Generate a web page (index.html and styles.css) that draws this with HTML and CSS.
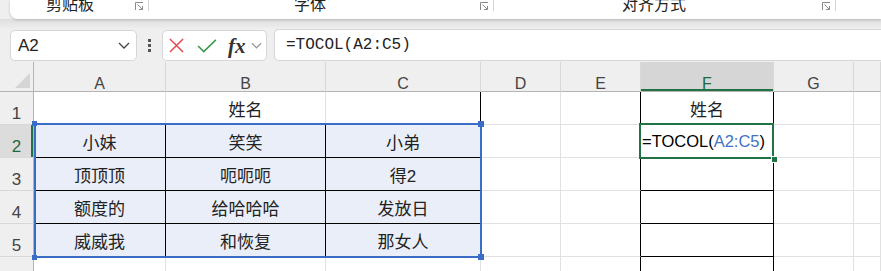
FILE: index.html
```html
<!DOCTYPE html>
<html lang="zh-CN">
    <head>
        <meta charset="UTF-8" />
        <meta name="viewport" content="width=device-width, initial-scale=1.0" />
        <title>TOCOL</title>

        <link rel="stylesheet" href="styles.css">
    </head>
    <body>
        <div class="ribbon">
            <div class="group g1">
                <span class="label">剪贴板</span>
                <svg class="launch" viewBox="0 0 8 8"><path d="M0.5 8V0.5H8M2.5 2.5L7.5 7.5M7.5 4V7.5H4" /></svg>
                <span class="sep"></span>
            </div>
            <div class="group g2">
                <span class="label">字体</span>
                <svg class="launch" viewBox="0 0 8 8"><path d="M0.5 8V0.5H8M2.5 2.5L7.5 7.5M7.5 4V7.5H4" /></svg>
                <span class="sep"></span>
            </div>
            <div class="group g3">
                <span class="label">对齐方式</span>
                <svg class="launch" viewBox="0 0 8 8"><path d="M0.5 8V0.5H8M2.5 2.5L7.5 7.5M7.5 4V7.5H4" /></svg>
                <span class="sep"></span>
            </div>
        </div>
        <div class="shade"></div>

        <div class="fbar">
            <div class="namebox">
                <span>A2</span>
                <svg class="chev" viewBox="0 0 12 7"><polyline points="1,1 6,6 11,1" /></svg>
            </div>
            <div class="dots"><i></i><i></i><i></i></div>
            <div class="fxbox">
                <svg class="cancel" viewBox="0 0 16 16"><path d="M1 1L15 15M15 1L1 15" /></svg>
                <svg class="enter" viewBox="0 0 21 15"><polyline points="1,7.5 7,13.5 20,1" /></svg>
                <span class="fx">fx</span>
                <svg class="chev small" viewBox="0 0 12 7"><polyline points="1,1 6,6 11,1" /></svg>
            </div>
            <div class="input">=TOCOL(A2:C5)</div>
        </div>

        <div class="sheet">
            <div class="grid">
                <div class="cell corner"><svg viewBox="0 0 16 16"><polygon points="16,0 16,16 0,16" /></svg></div>
                <div class="cell hdr">A</div>
                <div class="cell hdr">B</div>
                <div class="cell hdr">C</div>
                <div class="cell hdr">D</div>
                <div class="cell hdr">E</div>
                <div class="cell hdr on">F</div>
                <div class="cell hdr">G</div>
                <div class="cell hdr"></div>

                <div class="cell rh">1</div>
                <div class="cell"></div>
                <div class="cell">姓名</div>
                <div class="cell bk-r"></div>
                <div class="cell"></div>
                <div class="cell bk-r"></div>
                <div class="cell bk-r bk-b">姓名</div>
                <div class="cell"></div>
                <div class="cell"></div>

                <div class="cell rh on">2</div>
                <div class="cell rng bk-r bk-b">小妹</div>
                <div class="cell rng bk-r bk-b">笑笑</div>
                <div class="cell rng bk-b">小弟</div>
                <div class="cell"></div>
                <div class="cell bk-r"></div>
                <div class="cell bk-r bk-b edit">=TOCOL(<span class="ref">A2:C5</span>)</div>
                <div class="cell"></div>
                <div class="cell"></div>

                <div class="cell rh">3</div>
                <div class="cell rng bk-r bk-b">顶顶顶</div>
                <div class="cell rng bk-r bk-b">呃呃呃</div>
                <div class="cell rng bk-b">得2</div>
                <div class="cell"></div>
                <div class="cell bk-r"></div>
                <div class="cell bk-r bk-b"></div>
                <div class="cell"></div>
                <div class="cell"></div>

                <div class="cell rh">4</div>
                <div class="cell rng bk-r bk-b">额度的</div>
                <div class="cell rng bk-r bk-b">给哈哈哈</div>
                <div class="cell rng bk-b">发放日</div>
                <div class="cell"></div>
                <div class="cell bk-r"></div>
                <div class="cell bk-r bk-b"></div>
                <div class="cell"></div>
                <div class="cell"></div>

                <div class="cell rh">5</div>
                <div class="cell rng bk-r">威威我</div>
                <div class="cell rng bk-r">和恢复</div>
                <div class="cell rng">那女人</div>
                <div class="cell"></div>
                <div class="cell bk-r"></div>
                <div class="cell bk-r bk-b"></div>
                <div class="cell"></div>
                <div class="cell"></div>

                <div class="cell rh">6</div>
                <div class="cell"></div>
                <div class="cell"></div>
                <div class="cell"></div>
                <div class="cell"></div>
                <div class="cell bk-r"></div>
                <div class="cell bk-r"></div>
                <div class="cell"></div>
                <div class="cell"></div>
            </div>

            <div class="range"></div>
            <i class="knob tl"></i>
            <i class="knob tr"></i>
            <i class="knob bl"></i>
            <i class="knob br"></i>
            <div class="active"></div>
            <i class="fill"></i>
        </div>
    </body>
</html>
```

FILE: styles.css
```css
body {
    margin: 0px;
    padding: 0px;
    width: 881px;
    height: 271px;
    overflow: hidden;
    font-family: "Liberation Sans", "Noto Sans CJK SC", sans-serif;
    background-color: #efefef;
    color: #222222;
}

/* ribbon */
.ribbon {
    height: 19px;
    margin-left: 10px;
    display: flex;
    background-color: #ffffff;
    border-bottom-left-radius: 8px;
    overflow: hidden;
    position: relative;
    z-index: 1;
    box-shadow: 0 1px 3px rgba(0, 0, 0, 0.18);
}

.shade {
    height: 10px;
    background: linear-gradient(#dedede, #efefef);
}

.group {
    display: flex;
    align-items: flex-start;
}

.label {
    font-family: "Noto Sans CJK SC", sans-serif;
    font-size: 16px;
    line-height: 16px;
    margin-top: -5px;
    text-align: center;
    box-sizing: border-box;
}

.g1 .label { width: 125px; padding-right: 5px; }
.g2 .label { width: 331px; padding-right: 9px; }
.g3 .label { width: 328px; padding-right: 8px; }

.launch {
    width: 8px;
    height: 8px;
    margin-top: 2px;
    fill: none;
    stroke: #8a8a8a;
    stroke-width: 1;
}

.sep {
    width: 1px;
    height: 11px;
    margin-left: 5px;
    background-color: #d4d4d4;
}

/* formula bar */
.fbar {
    height: 32px;
    display: flex;
    align-items: center;
}

.namebox {
    margin-left: 10px;
    width: 127px;
    height: 31px;
    margin-top: 1px;
    box-sizing: border-box;
    border: 1px solid #d6d6d6;
    border-radius: 5px;
    background-color: #ffffff;
    display: flex;
    align-items: center;
    justify-content: space-between;
    padding: 0 6px 0 7px;
    font-size: 17px;
}

.chev {
    width: 12px;
    height: 7px;
    fill: none;
    stroke: #444444;
    stroke-width: 1.3;
}

.chev.small {
    width: 11px;
    stroke: #9a9a9a;
}

.dots {
    margin-left: 11px;
    display: flex;
    flex-direction: column;
    gap: 2px;
    margin-top: 1px;
}

.dots i {
    width: 3px;
    height: 3px;
    background-color: #555555;
}

.fxbox {
    margin-left: 11px;
    width: 105px;
    height: 31px;
    margin-top: 1px;
    box-sizing: border-box;
    border: 1px solid #d6d6d6;
    border-radius: 5px;
    background-color: #ffffff;
    display: flex;
    align-items: center;
    padding-left: 6px;
}

.cancel {
    width: 15px;
    height: 15px;
    fill: none;
    stroke: #e5484d;
    stroke-width: 1.6;
}

.enter {
    width: 20px;
    height: 14px;
    margin-left: 13px;
    fill: none;
    stroke: #3c9a4c;
    stroke-width: 1.7;
}

.fx {
    margin-left: 11px;
    font-family: "Liberation Serif", serif;
    font-style: italic;
    font-weight: bold;
    font-size: 21px;
    line-height: 20px;
    color: #333333;
}

.fxbox .chev.small {
    margin-left: 5px;
}

.input {
    flex: 1;
    margin-left: 7px;
    height: 32px;
    box-sizing: border-box;
    border: 1px solid #d6d6d6;
    border-right: none;
    border-radius: 5px 0 0 5px;
    background-color: #ffffff;
    padding-left: 11px;
    font-family: "Liberation Mono", monospace;
    font-size: 16px;
    line-height: 30px;
}

/* sheet */
.sheet {
    margin-top: 1px;
    position: relative;
    background-color: #ffffff;
}

.grid {
    display: grid;
    grid-template-columns: 34px 132px 160px 155px 80px 80px 133px 80px 1fr;
    grid-template-rows: 30px repeat(6, 33px);
}

.cell {
    box-sizing: border-box;
    border-right: 1px solid #e1e1e1;
    border-bottom: 1px solid #e1e1e1;
    display: flex;
    align-items: center;
    justify-content: center;
    font-size: 17px;
    padding-top: 1px;
}

.hdr, .corner {
    background-color: #efefef;
    border-right-color: #d8d8d8;
    border-bottom-color: #b4b4b4;
    align-items: flex-end;
    line-height: 14px;
    font-size: 16px;
    color: #444444;
}

.corner {
    border-right-color: #b4b4b4;
    justify-content: flex-end;
    padding: 0 3px 3px 0;
}

.corner svg {
    width: 15px;
    height: 15px;
    fill: #d5d5d5;
}

.hdr.on {
    background-color: #d6d6d6;
    color: #1e6b41;
    box-shadow: inset 0 -2px #217346;
}

.rh {
    background-color: #efefef;
    border-right-color: #b4b4b4;
    border-bottom-color: #d8d8d8;
    align-items: flex-end;
    line-height: 20px;
    color: #444444;
    padding-top: 0px;
}

.rh.on {
    background-color: #dcdcdc;
    color: #1e6b41;
    box-shadow: inset -2px 0 #217346;
}

.rng {
    background-color: #e9eef8;
}

.bk-r {
    border-right-color: #000000;
}

.bk-b {
    border-bottom-color: #000000;
}

.edit {
    justify-content: flex-start;
    padding-left: 1px;
    font-size: 16.5px;
    color: #000000;
}

.ref {
    color: #4472c4;
}

.range {
    position: absolute;
    left: 34px;
    top: 61px;
    width: 448px;
    height: 135px;
    box-sizing: border-box;
    border: 2px solid #3a6ec6;
}

.knob {
    position: absolute;
    width: 5px;
    height: 5px;
    background-color: #3a6ec6;
}

.knob.tl { left: 32px; top: 59px; }
.knob.tr { left: 478px; top: 59px; width: 6px; height: 6px; }
.knob.bl { left: 32px; top: 193px; }
.knob.br { left: 478px; top: 192px; width: 6px; height: 6px; }

.active {
    position: absolute;
    left: 639px;
    top: 61px;
    width: 135px;
    height: 36px;
    box-sizing: border-box;
    border: 2px solid #217346;
}

.fill {
    position: absolute;
    left: 771px;
    top: 94px;
    width: 5px;
    height: 5px;
    background-color: #217346;
    border: 1px solid #ffffff;
}
```
